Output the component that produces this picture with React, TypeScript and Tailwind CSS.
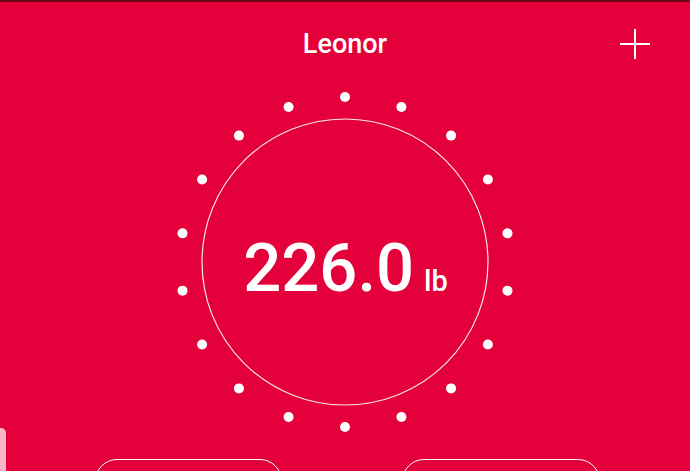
import React from 'react';

const DOT_COUNT = 18;

function Gauge({ value, unit }: { value: string; unit: string }) {
  const dots = Array.from({ length: DOT_COUNT }, (_, i) => {
    const a = ((10 + i * 20) * Math.PI) / 180;
    return { cx: 170 + 165 * Math.cos(a), cy: 170 - 165 * Math.sin(a) };
  });

  return (
    <div className="relative mx-auto flex h-[340px] w-[340px] items-center justify-center">
      <svg className="absolute inset-0" width="340" height="340" viewBox="0 0 340 340">
        <circle cx="170" cy="170" r="143" fill="none" stroke="white" strokeOpacity="0.9" strokeWidth="1.2" />
        {dots.map((d, i) => (
          <circle key={i} cx={d.cx} cy={d.cy} r="5" fill="white" />
        ))}
      </svg>
      <div className="relative flex items-baseline gap-[10px] pt-[12px] pl-[1px] text-white">
        <span className="text-[67px] font-medium leading-none">{value}</span>
        <span className="text-[29px] font-medium leading-none">{unit}</span>
      </div>
    </div>
  );
}

export default function App() {
  return (
    <div
      className="relative h-[471px] w-[690px] overflow-hidden bg-[#e4003a] text-white"
      style={{ fontFamily: 'Roboto, "Liberation Sans", sans-serif' }}
    >
      <div className="h-[2px] bg-[#6e0a18]" />

      {/* header */}
      <div className="grid h-[84px] grid-cols-[1fr_auto_1fr] items-center">
        <div />
        <h1 className="text-[27px] font-medium leading-none">Leonor</h1>
        <div className="flex justify-end pr-[40px]">
          <svg width="30" height="30" viewBox="0 0 30 30" fill="none" stroke="white" strokeWidth="2">
            <path d="M15 0v30M0 15h30" />
          </svg>
        </div>
      </div>

      <div className="mt-[6px]">
        <Gauge value="226.0" unit="lb" />
      </div>

      {/* bottom actions */}
      <div className="mt-[27px] flex gap-[120px] pl-[95px]">
        <button className="h-[56px] w-[187px] rounded-[22px] border-[1.5px] border-white" />
        <button className="h-[56px] w-[198px] rounded-[22px] border-[1.5px] border-white" />
      </div>

      {/* side handle peeking in */}
      <div className="absolute left-0 top-[428px] h-[60px] w-[6px] rounded-tr-[5px] bg-[#f8b6c6]" />
    </div>
  );
}
